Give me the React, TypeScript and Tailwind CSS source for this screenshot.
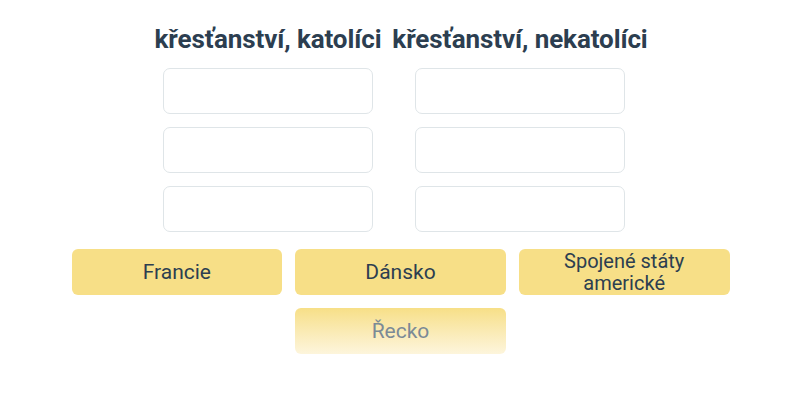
import React from 'react';

const slots = [0, 1, 2];

export default function App() {
  return (
    <div className="w-[800px] h-[400px] bg-white font-['Roboto',sans-serif] text-[#2c3e50]">
      <div className="flex justify-center gap-[12px] pt-[22px] pr-[12px]">
        {['křesťanství, katolíci', 'křesťanství, nekatolíci'].map((title) => (
          <div key={title} className="flex w-[240px] flex-col items-center">
            <h2 className="whitespace-nowrap text-[26px] font-bold leading-[34px] tracking-[-0.1px]">{title}</h2>
            <div className="mt-[12px] flex flex-col gap-[13px]">
              {slots.map((i) => (
                <div key={i} className="h-[46px] w-[210px] rounded-[7px] border border-[#dfe5e8] bg-white" />
              ))}
            </div>
          </div>
        ))}
      </div>

      <div className="mx-auto mt-[17px] grid w-[659px] grid-cols-3 gap-[13px] pl-[1px]">
        <button className="flex h-[46px] items-center justify-center rounded-[6px] bg-[#f7df87] text-[21px] leading-[22px]">
          Francie
        </button>
        <button className="flex h-[46px] items-center justify-center rounded-[6px] bg-[#f7df87] text-[21px] leading-[22px]">
          Dánsko
        </button>
        <button className="flex h-[46px] flex-col items-center justify-center rounded-[6px] bg-[#f7df87] text-center text-[20px] leading-[22px]">
          <span>Spojené státy</span>
          <span>americké</span>
        </button>
        <div />
        <button className="flex h-[46px] items-center justify-center rounded-[6px] bg-gradient-to-b from-[#f7df87] to-[#fdf5dc] text-[21px] leading-[22px] text-[#7b8a96]">
          Řecko
        </button>
      </div>
    </div>
  );
}
